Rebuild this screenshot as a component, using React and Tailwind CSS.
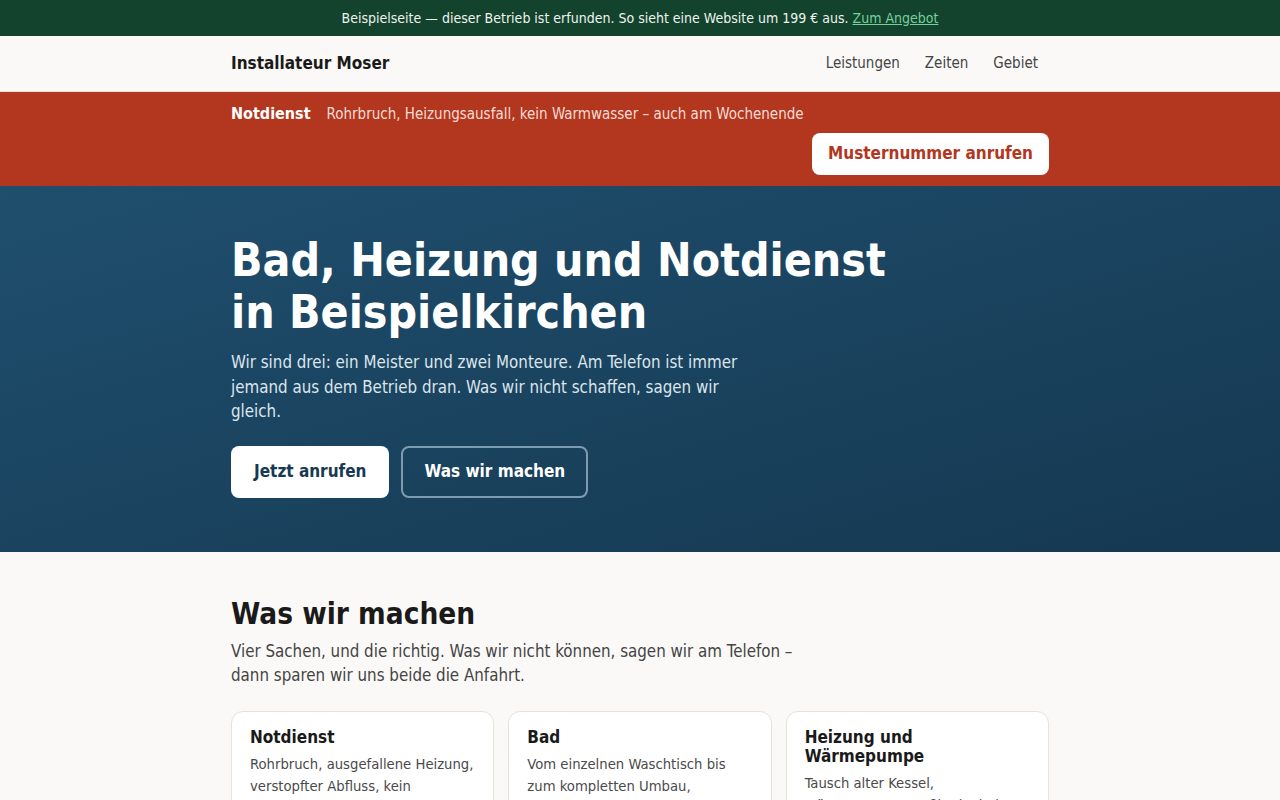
import React from "react";

const services = [
  {
    title: "Notdienst",
    text: "Rohrbruch, ausgefallene Heizung, verstopfter Abfluss, kein Warmwasser. Wir kommen auch am Wochenende.",
  },
  {
    title: "Bad",
    text: "Vom einzelnen Waschtisch bis zum kompletten Umbau, barrierefrei auf Wunsch.",
  },
  {
    title: "Heizung und Wärmepumpe",
    text: "Tausch alter Kessel, Wärmepumpen, Fußbodenheizung und die jährliche Wartung.",
  },
  {
    title: "Wasser und Abwasser",
    text: "Leitungen, Armaturen, Enthärtung und Rückstausicherung.",
  },
];

const App = () => {
  return (
    <div className="min-h-screen bg-[#faf9f7] font-['DejaVu_Sans_Condensed','DejaVu_Sans',sans-serif] text-[#1a1a1a]">
      {/* demo notice */}
      <div className="flex h-9 items-center justify-center bg-[#14432d] text-sm text-[#eef3ef]">
        <span>
          Beispielseite — dieser Betrieb ist erfunden. So sieht eine Website um 199 € aus.{" "}
          <a href="#" className="text-[#74d19c] underline">
            Zum Angebot
          </a>
        </span>
      </div>

      <header className="border-b border-[#e6e2dc] bg-[#faf9f7]">
        <div className="mx-auto flex h-[55px] max-w-[818px] items-center justify-between">
          <div className="text-[17px] font-bold text-[#1a1a1a]">Installateur Moser</div>
          <nav className="flex gap-[25px] pr-[11px] text-[15px] text-[#444]">
            <a href="#">Leistungen</a>
            <a href="#">Zeiten</a>
            <a href="#">Gebiet</a>
          </nav>
        </div>
      </header>

      {/* emergency strip, the call button drops to its own row */}
      <div className="bg-[#b3361e] pt-3 pb-[11px] text-white">
        <div className="mx-auto flex max-w-[818px] flex-wrap items-center gap-x-6 gap-y-[9px]">
          <div className="flex h-5 items-center gap-4 leading-5">
            <strong className="text-base font-bold">Notdienst</strong>
            <span className="text-[15px] text-[#f6ddd5]">
              Rohrbruch, Heizungsausfall, kein Warmwasser – auch am Wochenende
            </span>
          </div>
          <a
            href="#"
            className="ml-auto flex h-[42px] items-center rounded-lg bg-white px-4 text-[17px] font-bold text-[#b3361e]"
          >
            Musternummer anrufen
          </a>
        </div>
      </div>

      <section className="bg-gradient-to-br from-[#1f4f6e] to-[#153851] pt-12 pb-[54px] text-white">
        <div className="mx-auto max-w-[818px]">
          <h1 className="text-[46px] leading-[52px] font-bold">
            Bad, Heizung und Notdienst
            <br />
            in Beispielkirchen
          </h1>
          <p className="mt-3 max-w-[540px] text-[16.8px] leading-[24.5px] text-[#dce5ec]">
            Wir sind drei: ein Meister und zwei Monteure. Am Telefon ist immer jemand aus dem
            Betrieb dran. Was wir nicht schaffen, sagen wir gleich.
          </p>
          <div className="mt-[22px] flex gap-3">
            <a
              href="#"
              className="flex h-[52px] items-center rounded-lg bg-white px-[23px] text-[17px] font-bold text-[#173a52]"
            >
              Jetzt anrufen
            </a>
            <a
              href="#"
              className="flex h-[52px] items-center rounded-lg border-2 border-[#7f9bb0] px-[21px] text-[17px] font-bold text-white"
            >
              Was wir machen
            </a>
          </div>
        </div>
      </section>

      <section className="pt-[42px] pb-16">
        <div className="mx-auto max-w-[818px]">
          <h2 className="text-[29.5px] leading-[40px] font-bold text-[#1a1a1a]">Was wir machen</h2>
          <p className="mt-[5px] max-w-[580px] text-[16.8px] leading-6 text-[#444]">
            Vier Sachen, und die richtig. Was wir nicht können, sagen wir am Telefon – dann sparen
            wir uns beide die Anfahrt.
          </p>
          <div className="mt-6 grid grid-cols-3 gap-[14px]">
            {services.map((s) => (
              <div
                key={s.title}
                className="rounded-xl border border-[#e6e2dc] bg-white pt-4 pr-4 pb-5 pl-[18px]"
              >
                <h3 className="text-[17px] leading-[19px] font-bold text-[#1a1a1a]">{s.title}</h3>
                <p className="mt-[6px] text-[14.7px] leading-[22px] text-[#4a4a4a]">{s.text}</p>
              </div>
            ))}
          </div>
        </div>
      </section>
    </div>
  );
};

export default App;
